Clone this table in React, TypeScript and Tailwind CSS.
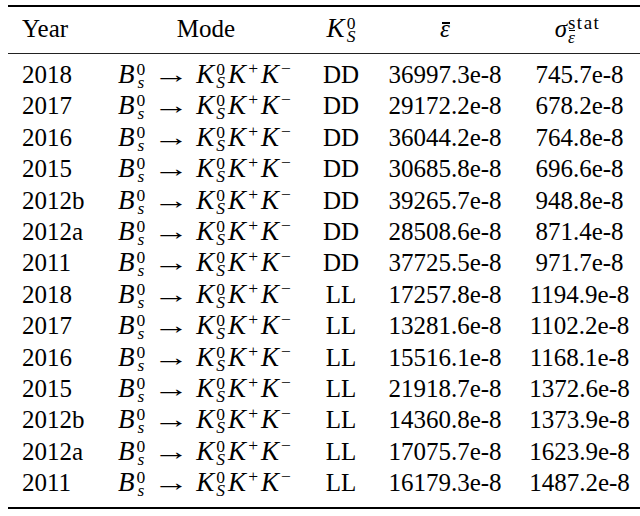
import React from "react";

const rows: [string, string, string, string][] = [
  ["2018", "DD", "36997.3e-8", "745.7e-8"],
  ["2017", "DD", "29172.2e-8", "678.2e-8"],
  ["2016", "DD", "36044.2e-8", "764.8e-8"],
  ["2015", "DD", "30685.8e-8", "696.6e-8"],
  ["2012b", "DD", "39265.7e-8", "948.8e-8"],
  ["2012a", "DD", "28508.6e-8", "871.4e-8"],
  ["2011", "DD", "37725.5e-8", "971.7e-8"],
  ["2018", "LL", "17257.8e-8", "1194.9e-8"],
  ["2017", "LL", "13281.6e-8", "1102.2e-8"],
  ["2016", "LL", "15516.1e-8", "1168.1e-8"],
  ["2015", "LL", "21918.7e-8", "1372.6e-8"],
  ["2012b", "LL", "14360.8e-8", "1373.9e-8"],
  ["2012a", "LL", "17075.7e-8", "1623.9e-8"],
  ["2011", "LL", "16179.3e-8", "1487.2e-8"],
];

const cols = "grid grid-cols-[93px_210px_60px_148px_121px]";

function SupSub({ sup, sub, pr }: { sup: React.ReactNode; sub: React.ReactNode; pr?: string }) {
  return (
    <span className={`inline-block align-[-5px] text-[17.5px] leading-[13px] not-italic pl-[1px] ${pr ?? "pr-[3px]"}`}>
      <span className="block">{sup}</span>
      <span className="block">{sub}</span>
    </span>
  );
}

function Sup({ children }: { children: React.ReactNode }) {
  return (
    <span className="inline-block align-[9px] text-[17.5px] leading-none not-italic pl-[1px] pr-[3px]">
      {children}
    </span>
  );
}

function EpsBar({ small }: { small?: boolean }) {
  return (
    <span className="relative inline-block italic">
      ε
      <span
        className={
          small
            ? "absolute left-[1px] right-[0px] top-[0px] h-[1px] bg-black"
            : "absolute left-[2px] right-[0px] top-[9px] h-[1.5px] bg-black"
        }
      />
    </span>
  );
}

function M({ children }: { children: React.ReactNode }) {
  return <i className="inline-block text-[27px] pr-[1px]">{children}</i>;
}

function Mode() {
  return (
    <span className="whitespace-nowrap">
      <M>B</M>
      <SupSub sup="0" sub={<i>s</i>} pr="pr-[1px]" />
      <span className="inline-block w-[32px] mx-[9px] text-center scale-x-[1.45]">→</span>
      <M>K</M>
      <SupSub sup="0" sub={<i>S</i>} />
      <M>K</M>
      <Sup>+</Sup>
      <M>K</M>
      <Sup>−</Sup>
    </span>
  );
}

export default function App() {
  return (
    <div className="w-[640px] h-[516px] overflow-hidden bg-white text-black font-[family-name:Liberation_Serif,serif] text-[25px] pl-[8px] pt-[5px]">
      <div className="h-[2px] bg-black" />
      <div className={`${cols} mt-[6px] h-[31.4px] leading-[31.4px]`}>
        <div className="pl-[14px] text-left">Year</div>
        <div className="text-center">Mode</div>
        <div className="text-center">
          <M>K</M>
          <SupSub sup="0" sub={<i>S</i>} pr="pr-[0px]" />
        </div>
        <div className="text-center">
          <EpsBar />
        </div>
        <div className="text-center pr-[4px]">
          <i className="inline-block pr-[1px]">σ</i>
          <span className="inline-block align-[-6px] text-[19px] leading-[15px] text-left">
            <span className="block tracking-[1.5px]">stat</span>
            <span className="block text-[17.5px]">
              <EpsBar small />
            </span>
          </span>
        </div>
      </div>
      <div className="mt-[8.6px] h-[1px] bg-[#222]" />
      <div className="mt-[5px]">
        {rows.map((r, i) => (
          <div key={i} className={`${cols} h-[31.4px] leading-[31.4px]`}>
            <div className="pl-[14px] text-left">{r[0]}</div>
            <div className="text-center">
              <Mode />
            </div>
            <div className="text-center">{r[1]}</div>
            <div className="text-center">{r[2]}</div>
            <div className="text-center">{r[3]}</div>
          </div>
        ))}
      </div>
      <div className="mt-[8.5px] h-[2px] bg-black" />
    </div>
  );
}
